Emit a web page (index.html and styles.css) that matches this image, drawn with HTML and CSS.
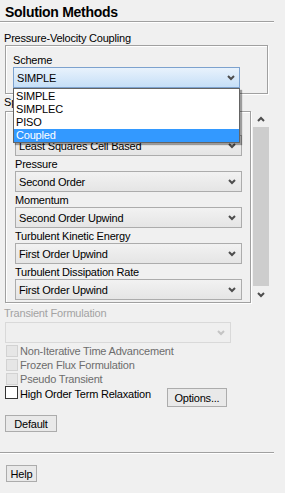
FILE: index.html
```html
<!DOCTYPE html>
<html lang="en">
<head>
    <meta charset="UTF-8">
    <title>Solution Methods</title>
    <link rel="stylesheet" href="styles.css">
</head>
<body>
    <div class="panel">
        <div class="title">Solution Methods</div>
        <div class="sep"></div>

        <!-- Pressure-Velocity Coupling -->
        <div class="label">Pressure-Velocity Coupling</div>
        <div class="group pv">
            <div class="field-label">Scheme</div>
            <div class="combo focus">
                <span>SIMPLE</span>
                <svg class="chev" width="8" height="6" viewBox="0 0 8 6"><polyline points="1,1 4,4 7,1" /></svg>
                <ul class="dropdown">
                    <li>SIMPLE</li>
                    <li>SIMPLEC</li>
                    <li>PISO</li>
                    <li class="selected">Coupled</li>
                </ul>
            </div>
        </div>

        <!-- Spatial Discretization (partly under the open list) -->
        <div class="label spatial-label">Spatial Discretization</div>
        <div class="scroll-row">
            <div class="group spatial">
                <div class="field-label">Gradient</div>
                <div class="combo">
                    <span>Least Squares Cell Based</span>
                    <svg class="chev" width="8" height="6" viewBox="0 0 8 6"><polyline points="1,1 4,4 7,1" /></svg>
                </div>
                <div class="field-label">Pressure</div>
                <div class="combo">
                    <span>Second Order</span>
                    <svg class="chev" width="8" height="6" viewBox="0 0 8 6"><polyline points="1,1 4,4 7,1" /></svg>
                </div>
                <div class="field-label">Momentum</div>
                <div class="combo">
                    <span>Second Order Upwind</span>
                    <svg class="chev" width="8" height="6" viewBox="0 0 8 6"><polyline points="1,1 4,4 7,1" /></svg>
                </div>
                <div class="field-label">Turbulent Kinetic Energy</div>
                <div class="combo">
                    <span>First Order Upwind</span>
                    <svg class="chev" width="8" height="6" viewBox="0 0 8 6"><polyline points="1,1 4,4 7,1" /></svg>
                </div>
                <div class="field-label">Turbulent Dissipation Rate</div>
                <div class="combo">
                    <span>First Order Upwind</span>
                    <svg class="chev" width="8" height="6" viewBox="0 0 8 6"><polyline points="1,1 4,4 7,1" /></svg>
                </div>
            </div>
            <div class="scrollbar">
                <div class="sb-btn up">
                    <svg class="chev" width="8" height="6" viewBox="0 0 8 6"><polyline points="1,5 4,2 7,5" /></svg>
                </div>
                <div class="sb-thumb"></div>
                <div class="sb-btn down">
                    <svg class="chev" width="8" height="6" viewBox="0 0 8 6"><polyline points="1,1 4,4 7,1" /></svg>
                </div>
            </div>
        </div>

        <!-- Transient -->
        <div class="label disabled">Transient Formulation</div>
        <div class="combo disabled">
            <span></span>
            <svg class="chev" width="8" height="6" viewBox="0 0 8 6"><polyline points="1,1 4,4 7,1" /></svg>
        </div>

        <div class="check-row disabled"><span class="box"></span><span>Non-Iterative Time Advancement</span></div>
        <div class="check-row disabled"><span class="box"></span><span>Frozen Flux Formulation</span></div>
        <div class="check-row disabled"><span class="box"></span><span>Pseudo Transient</span></div>
        <div class="check-row relax">
            <span class="box"></span><span class="relax-text">High Order Term Relaxation</span>
            <button class="btn options">Options...</button>
        </div>

        <button class="btn default">Default</button>
        <div class="sep bottom"></div>
        <button class="btn help">Help</button>
    </div>
</body>
</html>
```

FILE: styles.css
```css
* {
    box-sizing: border-box;
}
body {
    margin: 0;
    background-color: #f0f0f0;
    font-family: 'Liberation Sans', Arial, sans-serif;
    font-size: 11px;
    letter-spacing: -0.2px;
    color: #000;
}
.panel {
    display: flex;
    flex-direction: column;
    align-items: flex-start;
    width: 285px;
    padding-left: 5px;
}
.title {
    font-size: 14px;
    font-weight: bold;
    letter-spacing: -0.3px;
    line-height: 17px;
    padding-top: 4px;
}
.sep {
    align-self: stretch;
    width: 274px;
    height: 2px;
    margin-left: -5px;
    border-top: 1px solid #a0a0a0;
    border-bottom: 1px solid #fff;
}
.label {
    line-height: 13px;
    margin-top: 9px;
    margin-left: -1px;
}
.label.disabled {
    color: #a3a3a3;
    margin-top: 4px;
}
.spatial-label {
    margin-top: 2px;
}

/* group boxes */
.group {
    border: 1px solid #a0a0a0;
    box-shadow: inset 1px 1px 0 #fff, 1px 1px 0 #fff;
}
.group.pv {
    width: 263px;
    padding: 6px 7px 5px;
}
.field-label {
    line-height: 13px;
    padding-top: 2px;
}
.scroll-row {
    display: flex;
    gap: 2px;
    margin-top: 2px;
}
.group.spatial {
    width: 246px;
    height: 192px;
    padding: 8px 8px 2px 9px;
}

/* combo boxes */
.combo {
    position: relative;
    display: flex;
    align-items: center;
    justify-content: space-between;
    height: 21px;
    padding: 0 5px 0 3px;
    border: 1px solid #acacac;
    background: linear-gradient(#f2f2f2, #e5e5e5);
}
.combo .chev polyline {
    fill: none;
    stroke: #4d4d4d;
    stroke-width: 2;
}
.combo.focus {
    width: 227px;
    padding-right: 4px;
    border-color: #7da2ce;
    background: linear-gradient(#e8f2fc, #c6dff7);
}
.combo.disabled {
    width: 226px;
    margin-top: 2px;
    border-color: #d9d9d9;
    background: #efefef;
}
.combo.disabled .chev polyline {
    stroke: #c4c4c4;
}
.dropdown {
    position: absolute;
    z-index: 10;
    left: -1px;
    top: 20px;
    width: 227px;
    margin: 0;
    padding: 1px 0 0;
    list-style: none;
    background: #fff;
    border: 1px solid #646464;
    box-shadow: 2px 2px 1px rgba(0, 0, 0, 0.35);
}
.dropdown li {
    line-height: 13px;
    padding-left: 2px;
}
.dropdown li.selected {
    background: #3399ff;
    color: #fff;
}

/* scrollbar */
.scrollbar {
    display: flex;
    flex-direction: column;
    width: 16px;
}
.sb-btn {
    display: flex;
    align-items: center;
    justify-content: center;
    height: 16px;
}
.sb-btn.down {
    height: 17px;
}
.sb-btn .chev polyline {
    fill: none;
    stroke: #4d4d4d;
    stroke-width: 2;
}
.sb-thumb {
    flex: 1;
    background: #cdcdcd;
}

/* check boxes */
.check-row {
    display: flex;
    align-items: center;
    gap: 2px;
    height: 14px;
    padding-left: 1px;
    color: #6d6d6d;
}
.combo.disabled + .check-row {
    margin-top: 1px;
}
.check-row .box {
    width: 12px;
    height: 12px;
    border: 1px solid #d2d2d2;
    background: #e6e6e6;
}
.check-row.relax {
    align-items: flex-start;
    height: 21px;
    padding-left: 0;
    color: #000;
}
.check-row.relax .box {
    width: 13px;
    height: 13px;
    border: 1px solid #333;
    background: #fff;
}
.relax-text {
    margin-top: 2px;
    line-height: 13px;
}

/* buttons */
.btn {
    font-family: 'Liberation Sans', Arial, sans-serif;
    font-size: 11px;
    letter-spacing: -0.2px;
    color: #000;
    padding: 0;
    border: 1px solid #acacac;
    background: #e9e9e9;
    border-radius: 0;
}
.btn.options {
    width: 60px;
    height: 19px;
    margin-top: 2px;
    margin-left: 14px;
}
.btn.default {
    width: 52px;
    height: 17px;
    margin-top: 8px;
}
.sep.bottom {
    margin-top: 20px;
}
.btn.help {
    width: 31px;
    height: 17px;
    margin-top: 11px;
    margin-left: 1px;
}
```
